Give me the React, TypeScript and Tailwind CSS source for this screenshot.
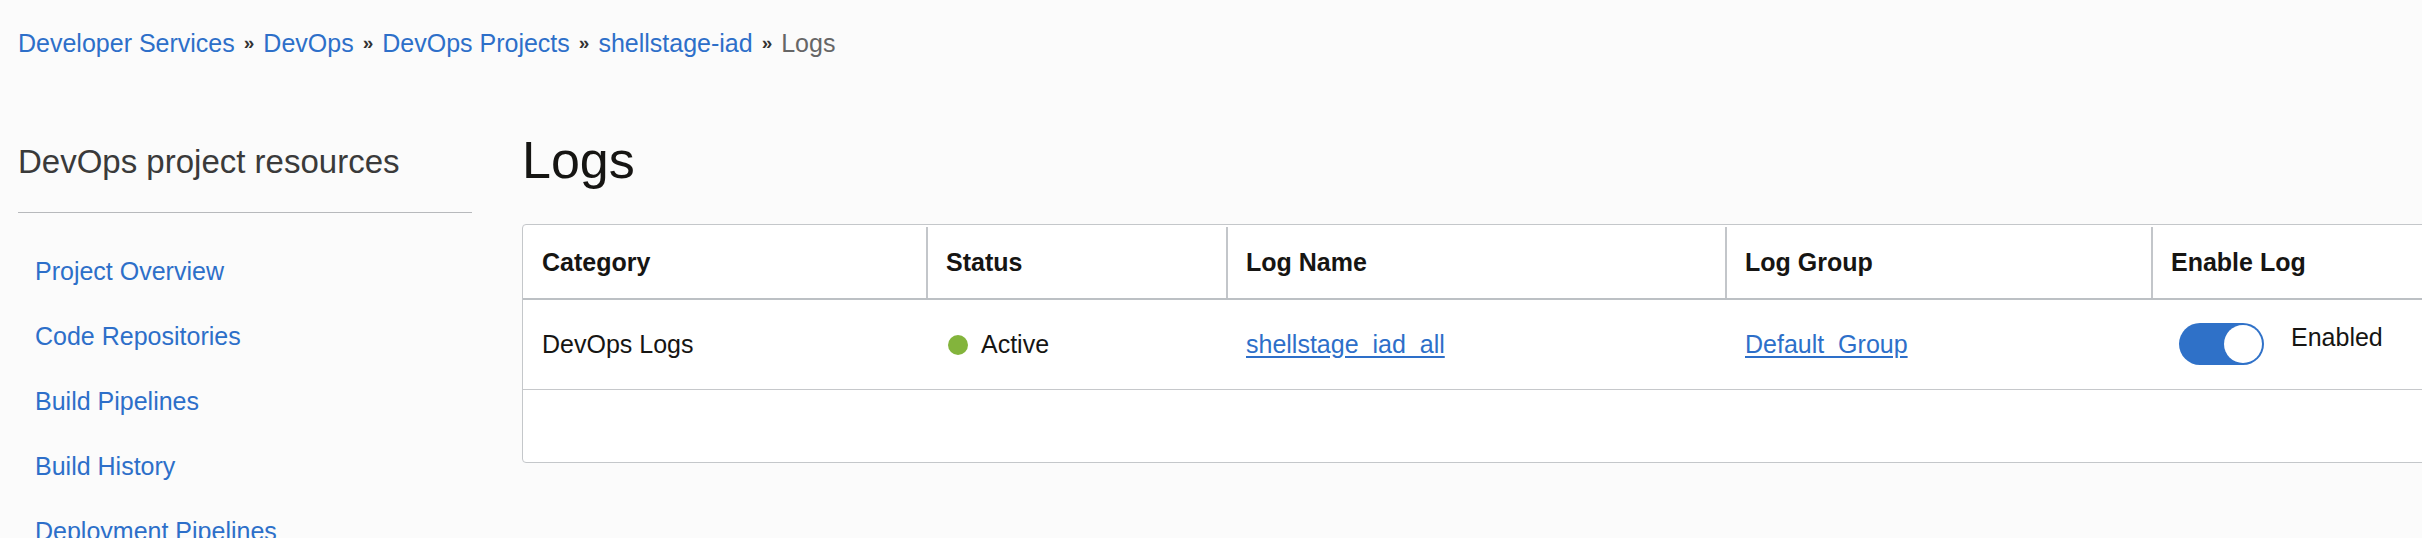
import React from 'react';

const font = { fontFamily: '"Helvetica Neue", "Liberation Sans", Arial, sans-serif' };

const crumbs = ['Developer Services', 'DevOps', 'DevOps Projects', 'shellstage-iad'];

const navItems = [
  'Project Overview',
  'Code Repositories',
  'Build Pipelines',
  'Build History',
  'Deployment Pipelines',
];

function Toggle({ on }: { on: boolean }) {
  return (
    <div
      className={
        'w-[85px] h-[42px] rounded-full p-[2px] flex items-center ' +
        (on ? 'bg-[#2f71c8] justify-end' : 'bg-gray-300 justify-start')
      }
    >
      <div className="w-[38px] h-[38px] rounded-full bg-white" />
    </div>
  );
}

export default function App() {
  return (
    <div
      className="min-h-screen bg-[#fbfbfb] text-[#161513] overflow-hidden"
      style={font}
    >
      {/* Breadcrumb */}
      <nav className="pt-[28px] pl-[18px] flex items-center text-[25px] leading-[30px] whitespace-nowrap">
        {crumbs.map((c) => (
          <React.Fragment key={c}>
            <a className="text-[#2d6fc9] cursor-pointer">{c}</a>
            <span className="mx-[9px] text-[19px] font-bold text-[#333]">»</span>
          </React.Fragment>
        ))}
        <span className="text-[#666]">Logs</span>
      </nav>

      <div className="mt-[72px] flex">
        {/* Sidebar */}
        <aside className="ml-[18px] w-[454px] shrink-0 pt-[12px]">
          <h2 className="text-[33px] leading-[40px] font-light text-[#3a3a3a]">
            DevOps project resources
          </h2>
          <div className="mt-[30px] h-px bg-[#b7b9bc]" />
          <ul className="mt-[43px] pl-[17px] flex flex-col gap-[35px]">
            {navItems.map((n) => (
              <li key={n} className="text-[25px] leading-[30px] text-[#2d6fc9] whitespace-nowrap">
                {n}
              </li>
            ))}
          </ul>
        </aside>

        {/* Main */}
        <main className="ml-[50px] flex-1 min-w-0">
          <h1 className="text-[52px] leading-[60px] font-normal text-[#161513]">Logs</h1>

          <div className="mt-[34px] w-[2000px] bg-white border border-[#c4c7ca] rounded-[4px] overflow-hidden">
            {/* Header */}
            <div className="flex h-[75px] pt-[2px] border-b-2 border-[#bcc0c4] text-[25px] font-bold whitespace-nowrap">
              <div className="w-[405px] pl-[19px] flex items-center border-r-2 border-[#c3c6ca]">Category</div>
              <div className="w-[300px] pl-[18px] flex items-center border-r-2 border-[#c3c6ca]">Status</div>
              <div className="w-[499px] pl-[18px] flex items-center border-r-2 border-[#c3c6ca]">Log Name</div>
              <div className="w-[426px] pl-[18px] flex items-center border-r-2 border-[#c3c6ca]">Log Group</div>
              <div className="flex-1 pl-[18px] flex items-center">Enable Log</div>
            </div>

            {/* Data row */}
            <div className="flex h-[90px] border-b border-[#c6c8cb] text-[25px] whitespace-nowrap">
              <div className="w-[405px] pl-[19px] flex items-center">DevOps Logs</div>
              <div className="w-[300px] pl-[20px] flex items-center gap-[13px]">
                <span className="w-[20px] h-[20px] rounded-full bg-[#83b43c]" />
                <span>Active</span>
              </div>
              <div className="w-[499px] pl-[18px] flex items-center">
                <a className="text-[#2d6fc9] underline underline-offset-[3px] cursor-pointer">shellstage_iad_all</a>
              </div>
              <div className="w-[426px] pl-[18px] flex items-center">
                <a className="text-[#2d6fc9] underline underline-offset-[3px] cursor-pointer">Default_Group</a>
              </div>
              <div className="flex-1 pl-[26px] flex items-start pt-[23px] gap-[27px]">
                <Toggle on />
                <span className="leading-[30px] -mt-[1px]">Enabled</span>
              </div>
            </div>

            {/* Empty row */}
            <div className="h-[72px]" />
          </div>
        </main>
      </div>
    </div>
  );
}
